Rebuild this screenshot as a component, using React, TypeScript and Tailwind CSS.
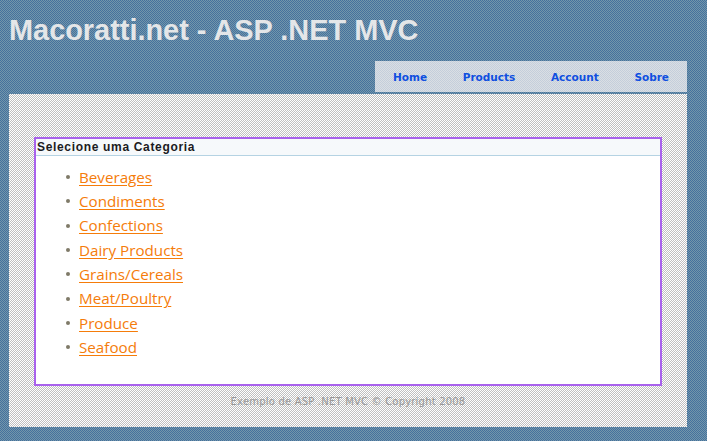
const links = ['Beverages', 'Condiments', 'Confections', 'Dairy Products', 'Grains/Cereals', 'Meat/Poultry', 'Produce', 'Seafood'];
const menu = ['Home', 'Products', 'Account', 'Sobre'];

export default function App() {
  return (
    <div className="h-[441px] w-[707px] overflow-hidden bg-[linear-gradient(#7396aa,#7396aa),linear-gradient(#44719e,#44719e),linear-gradient(90deg,#000_50%,#fff_50%),linear-gradient(#000_50%,#fff_50%)] bg-size-[2px_2px] [background-blend-mode:darken,lighten,difference,normal] font-['Liberation_Sans',sans-serif]">
      <header className="h-[61px] pl-[9px] pt-[13px]">
        <h1 className="text-[28.9px] leading-[34px] font-bold text-[#e4e6e8]">Macoratti.net - ASP .NET MVC</h1>
      </header>

      <nav className="ml-[375px] flex h-[31px] w-[312px] items-center justify-between bg-[linear-gradient(#dadfe4,#dadfe4),linear-gradient(#c4cedb,#c4cedb),linear-gradient(90deg,#000_50%,#fff_50%),linear-gradient(#000_50%,#fff_50%)] bg-size-[2px_2px] [background-blend-mode:darken,lighten,difference,normal] px-[18px] pt-[3px] font-['DejaVu_Sans',sans-serif] text-[10.5px] font-bold text-[#0f4fe0]">
        {menu.map(item => (
          <a key={item} href="#">{item}</a>
        ))}
      </nav>

      <main className="ml-[9px] mt-[2px] h-[333px] w-[678px] bg-[linear-gradient(#c0c0c0,#c0c0c0),linear-gradient(90deg,#000_50%,#fff_50%),linear-gradient(#000_50%,#fff_50%)] bg-size-[2px_2px] [background-blend-mode:lighten,difference,normal] px-[25px] pt-[43px]">
        <section className="h-[249px] border-2 border-[#a962ec] bg-white">
          <h2 className="h-[17px] border-b border-[#b5d3e3] bg-[#f6f9fb] pl-px text-[12px] leading-[16px] font-bold tracking-[0.67px] text-[#1b1b22]">
            Selecione uma Categoria
          </h2>
          <ul className="mt-[9px] ml-[30px] list-none font-['Open_Sans',sans-serif]">
            {links.map(link => (
              <li key={link} className="flex h-[24.3px] items-center gap-[9px] text-[15.2px]">
                <span className="size-[4px] rounded-full bg-[#7f7a68]" />
                <a href="#" className="text-[#f57c0a] underline underline-offset-2">{link}</a>
              </li>
            ))}
          </ul>
        </section>
        <footer className="mt-[9px] text-center font-['DejaVu_Sans',sans-serif] text-[10px] leading-[14px] tracking-[0.2px] text-[#979797]">
          Exemplo de ASP .NET MVC © Copyright 2008
        </footer>
      </main>
    </div>
  );
}
